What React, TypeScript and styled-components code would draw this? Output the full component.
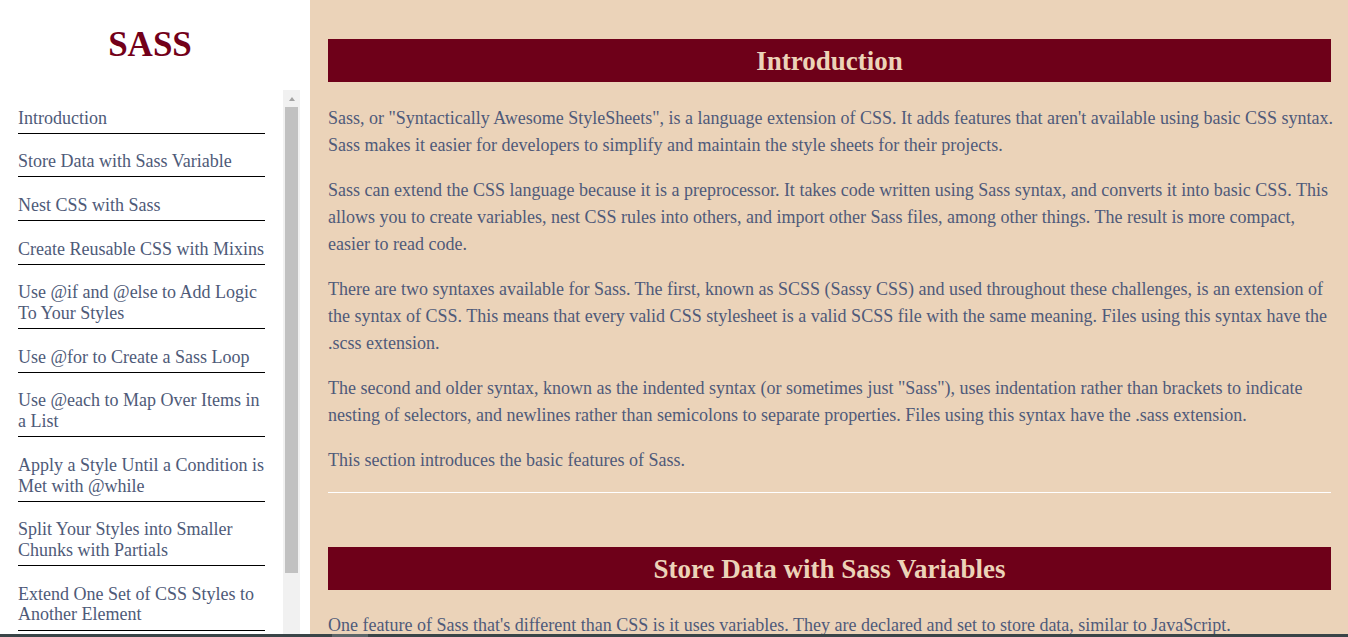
import React from "react";
import styled, { createGlobalStyle } from "styled-components";

const GlobalStyle = createGlobalStyle`
  html, body {
    margin: 0;
    padding: 0;
    height: 100%;
    overflow: hidden;
  }
  body {
    font-family: "Liberation Serif", "Times New Roman", serif;
    font-size: 18px;
    background: #ebd3b9;
  }
`;

const Page = styled.div`
  display: flex;
  height: 100vh;
  width: 100vw;
  overflow: hidden;
`;

const Sidebar = styled.aside`
  flex: 0 0 310px;
  display: flex;
  flex-direction: column;
  background: #ffffff;
  height: 100vh;
`;

const Title = styled.h1`
  margin: 0;
  width: 300px;
  height: 90px;
  box-sizing: border-box;
  padding-top: 25px;
  text-align: center;
  font-size: 35px;
  font-weight: bold;
  color: #730019;
`;

const NavArea = styled.div`
  display: flex;
  width: 300px;
  flex: 1;
  min-height: 0;
`;

const NavList = styled.nav`
  width: 283px;
  box-sizing: border-box;
  padding: 0 18px;
  overflow: hidden;
`;

const ScrollTrack = styled.div`
  flex: 0 0 17px;
  display: flex;
  flex-direction: column;
  background: #f1f1f1;
`;

const ScrollArrow = styled.div`
  height: 17px;
  display: flex;
  align-items: center;
  justify-content: center;

  &::before {
    content: "";
    width: 0;
    height: 0;
    border-left: 3.5px solid transparent;
    border-right: 3.5px solid transparent;
    border-bottom: 4px solid #a3a3a3;
  }
`;

const ScrollThumb = styled.div`
  height: 466px;
  margin: 0 2px;
  background: #c1c1c1;
`;

const NavLink = styled.a`
  display: block;
  width: 247px;
  padding: 17.5px 0 4.5px;
  border-bottom: 1px solid #000000;
  color: #4e5a78;
  font-size: 18px;
  line-height: 20.7px;
  text-decoration: none;
  cursor: pointer;
`;

const Main = styled.main`
  flex: 1;
  min-width: 0;
  height: 100vh;
  box-sizing: border-box;
  padding: 39px 17px 0 18px;
  overflow: hidden;
  background: #ebd3b9;
`;

const Section = styled.section<{ $last?: boolean }>`
  margin-bottom: ${(p) => (p.$last ? "0" : "54px")};
`;

const SectionTitle = styled.h2`
  margin: 0 0 22.5px;
  padding: 7px 0 5px;
  background: #6e0019;
  color: #ecd3b8;
  text-align: center;
  font-size: 27px;
  font-weight: bold;
  line-height: normal;
`;

const Para = styled.p`
  margin: 0 -8px 18px 0;
  color: #4f5a79;
  font-size: 18px;
  line-height: 27px;
`;

const Rule = styled.hr`
  margin: 0;
  border: none;
  border-top: 1px solid #ffffff;
  height: 0;
`;

const BottomBar = styled.div`
  position: fixed;
  left: 0;
  right: 0;
  bottom: 0;
  height: 3px;
  background: #3a4548;
`;

const BottomThumb = styled.div`
  position: absolute;
  left: 332px;
  top: 0;
  width: 36px;
  height: 3px;
  background: #5c6669;
`;

const navItems = [
  "Introduction",
  "Store Data with Sass Variable",
  "Nest CSS with Sass",
  "Create Reusable CSS with Mixins",
  "Use @if and @else to Add Logic To Your Styles",
  "Use @for to Create a Sass Loop",
  "Use @each to Map Over Items in a List",
  "Apply a Style Until a Condition is Met with @while",
  "Split Your Styles into Smaller Chunks with Partials",
  "Extend One Set of CSS Styles to Another Element",
];

export default function App() {
  return (
    <>
      <GlobalStyle />
      <Page>
        <Sidebar>
          <Title>SASS</Title>
          <NavArea>
            <NavList>
              {navItems.map((item) => (
                <NavLink key={item}>{item}</NavLink>
              ))}
            </NavList>
            <ScrollTrack>
              <ScrollArrow />
              <ScrollThumb />
            </ScrollTrack>
          </NavArea>
        </Sidebar>
        <Main>
          <Section>
            <SectionTitle>Introduction</SectionTitle>
            <Para>
              Sass, or "Syntactically Awesome StyleSheets", is a language extension of CSS. It
              adds features that aren't available using basic CSS syntax. Sass makes it easier for
              developers to simplify and maintain the style sheets for their projects.
            </Para>
            <Para>
              Sass can extend the CSS language because it is a preprocessor. It takes code written
              using Sass syntax, and converts it into basic CSS. This allows you to create
              variables, nest CSS rules into others, and import other Sass files, among other
              things. The result is more compact, easier to read code.
            </Para>
            <Para>
              There are two syntaxes available for Sass. The first, known as SCSS (Sassy CSS) and
              used throughout these challenges, is an extension of the syntax of CSS. This means
              that every valid CSS stylesheet is a valid SCSS file with the same meaning. Files
              using this syntax have the .scss extension.
            </Para>
            <Para>
              The second and older syntax, known as the indented syntax (or sometimes just
              "Sass"), uses indentation rather than brackets to indicate nesting of selectors, and
              newlines rather than semicolons to separate properties. Files using this syntax have
              the .sass extension.
            </Para>
            <Para>This section introduces the basic features of Sass.</Para>
            <Rule />
          </Section>
          <Section $last>
            <SectionTitle>Store Data with Sass Variables</SectionTitle>
            <Para>
              One feature of Sass that's different than CSS is it uses variables. They are declared
              and set to store data, similar to JavaScript.
            </Para>
            <Para>
              In JavaScript, variables are defined using the let and const keywords. In Sass,
              variables start with a $ followed by the variable name.
            </Para>
          </Section>
        </Main>
      </Page>
      <BottomBar>
        <BottomThumb />
      </BottomBar>
    </>
  );
}
